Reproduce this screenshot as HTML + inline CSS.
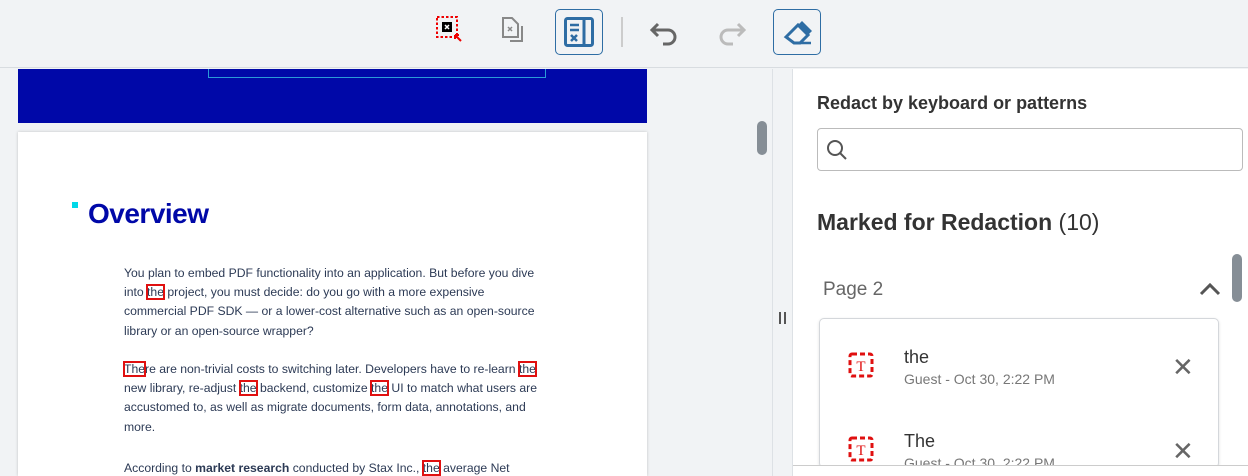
<!DOCTYPE html>
<html><head><style>
*{box-sizing:border-box;margin:0;padding:0}
html,body{width:1248px;height:476px;overflow:hidden}
body{background:#f1f3f5;font-family:"Liberation Sans",sans-serif;position:relative}
.tb{position:absolute;left:0;top:0;width:1248px;height:68px;background:#f1f3f5;border-bottom:1px solid #d8dce0}
.btn{position:absolute;top:9px;width:48px;height:46px;border:1px solid #2e6da4;border-radius:5px;background:#f1f3f5}
.left{position:absolute;left:0;top:69px;width:772px;height:407px;background:#f1f3f5;overflow:hidden}
.blue{position:absolute;left:18px;top:-1px;width:629px;height:55px;background:#0008a8}
.page{position:absolute;left:18px;top:63px;width:629px;height:344px;background:#fff;box-shadow:0 0 3px rgba(0,0,0,.2)}
.p{position:absolute;left:106px;width:460px;font-size:12.2px;line-height:19.2px;color:#2c3a55;white-space:nowrap}
.r{outline:2px solid #e01010;outline-offset:-1px}
.div{position:absolute;left:772px;top:69px;width:21px;height:407px;background:#f1f3f5;border-left:1px solid #dde1e5;border-right:1px solid #dde1e5}
.right{position:absolute;left:793px;top:69px;width:455px;height:407px;background:#fff;overflow:hidden}
.card{position:absolute;left:26px;top:249px;width:400px;height:150px;border:1px solid #d4d7db;border-radius:5px;box-shadow:0 1px 3px rgba(0,0,0,.12);background:#fff}
.it{position:absolute;left:84px;font-size:18px;color:#333}
.sub{position:absolute;left:84px;font-size:14px;color:#777}
.x{position:absolute;left:352px;font-size:26px;color:#666;line-height:1}
</style></head><body>
<div class="tb">
 <svg style="position:absolute;left:436px;top:16px" width="28" height="28"><rect x="1" y="1" width="20" height="20" fill="none" stroke="#e00" stroke-width="2" stroke-dasharray="2.5 2"/><rect x="6" y="6" width="10" height="10" fill="#000"/><path d="M9 9l4 4M13 9l-4 4" stroke="#fff" stroke-width="1.5"/><path d="M19 19l6 6M19 19v4M19 19h4" stroke="#e00" stroke-width="2"/></svg>
 <svg style="position:absolute;left:501px;top:16px" width="26" height="30"><path d="M2 2h9l6 6v13H2z" fill="none" stroke="#888" stroke-width="2"/><path d="M7 11l4 4M11 11l-4 4" stroke="#888" stroke-width="1.5"/><path d="M21 10v15H9" fill="none" stroke="#888" stroke-width="2"/></svg>
 <div class="btn" style="left:555px"></div>
 <svg style="position:absolute;left:564px;top:17px" width="32" height="32"><rect x="1.5" y="1.5" width="27" height="27" rx="2" fill="none" stroke="#2e6da4" stroke-width="3"/><path d="M20 2v26" stroke="#2e6da4" stroke-width="3"/><path d="M6 8h9M6 13h9" stroke="#2e6da4" stroke-width="2.5"/><path d="M7 18l6 6M13 18l-6 6" stroke="#2e6da4" stroke-width="2.5"/></svg>
 <div style="position:absolute;left:621px;top:17px;width:2px;height:30px;background:#ccc"></div>
 <svg style="position:absolute;left:648px;top:20px" width="34" height="26"><path d="M10 4L4 10l6 6" fill="none" stroke="#666" stroke-width="3"/><path d="M4 10h16a7 7 0 0 1 0 14h-5" fill="none" stroke="#666" stroke-width="3"/></svg>
 <svg style="position:absolute;left:714px;top:20px" width="34" height="26"><path d="M24 4l6 6-6 6" fill="none" stroke="#bbb" stroke-width="3"/><path d="M30 10H14a7 7 0 0 0 0 14h5" fill="none" stroke="#bbb" stroke-width="3"/></svg>
 <div class="btn" style="left:773px"></div>
 <svg style="position:absolute;left:782px;top:17px" width="32" height="32"><path d="M4 20L16 8l10 10-8 8h-6z" fill="none" stroke="#2e6da4" stroke-width="3"/><path d="M16 8l4-4 10 10-4 4z" fill="#2e6da4"/><path d="M12 26h17" stroke="#2e6da4" stroke-width="2.5"/></svg>
</div>
<div class="left">
 <div class="blue"><div style="position:absolute;left:190px;top:-2px;width:338px;height:12px;border:1px solid #2a9ad8;border-top:none"></div></div>
 <div class="page">
  <div style="position:absolute;left:54px;top:70px;width:6px;height:6px;background:#00d8e8"></div>
  <div style="position:absolute;left:70px;top:66px;font-size:28px;font-weight:bold;color:#0008a8;letter-spacing:-0.5px">Overview</div>
  <div class="p" style="top:132px">You plan to embed PDF functionality into an application. But before you dive<br>into <span class="r">the</span> project, you must decide: do you go with a more expensive<br>commercial PDF SDK — or a lower-cost alternative such as an open-source<br>library or an open-source wrapper?</div>
  <div class="p" style="top:228px"><span class="r">The</span>re are non-trivial costs to switching later. Developers have to re-learn <span class="r">the</span><br>new library, re-adjust <span class="r">the</span> backend, customize <span class="r">the</span> UI to match what users are<br>accustomed to, as well as migrate documents, form data, annotations, and<br>more.</div>
  <div class="p" style="top:327px">According to <b>market research</b> conducted by Stax Inc., <span class="r">the</span> average Net</div>
 </div>
 <div style="position:absolute;left:757px;top:52px;width:10px;height:34px;border-radius:5px;background:#868e96"></div>
</div>
<div class="div"><div style="position:absolute;left:6px;top:243px;width:2px;height:12px;background:#555"></div><div style="position:absolute;left:11px;top:243px;width:2px;height:12px;background:#555"></div></div>
<div class="right">
 <div style="position:absolute;left:24px;top:24px;font-size:18px;font-weight:bold;color:#333">Redact by keyboard or patterns</div>
 <div style="position:absolute;left:24px;top:59px;width:426px;height:43px;border:1px solid #bbb;border-radius:4px"><svg style="position:absolute;left:8px;top:10px" width="22" height="22"><circle cx="9" cy="9" r="7" fill="none" stroke="#555" stroke-width="2"/><path d="M14 14l6 6" stroke="#555" stroke-width="2"/></svg></div>
 <div style="position:absolute;left:24px;top:140px;font-size:23px;color:#333"><b>Marked for Redaction</b> (10)</div>
 <div style="position:absolute;left:30px;top:210px;font-size:19px;color:#666">Page 2</div>
 <svg style="position:absolute;left:405px;top:212px" width="24" height="16"><path d="M3 13l9-9 9 9" fill="none" stroke="#555" stroke-width="3"/></svg>
 <div style="position:absolute;left:439px;top:185px;width:10px;height:48px;border-radius:5px;background:#868e96"></div>
 <div class="card">
  <svg style="position:absolute;left:28px;top:33px" width="28" height="28"><rect x="2" y="2" width="22" height="22" rx="2" fill="none" stroke="#e01010" stroke-width="3" stroke-dasharray="5 3"/><text x="13" y="19" text-anchor="middle" font-family="Liberation Serif" font-size="15" fill="#e01010">T</text></svg>
  <div class="it" style="top:28px">the</div><div class="sub" style="top:52px">Guest - Oct 30, 2:22 PM</div><div class="x" style="top:35px">✕</div>
  <svg style="position:absolute;left:28px;top:117px" width="28" height="28"><rect x="2" y="2" width="22" height="22" rx="2" fill="none" stroke="#e01010" stroke-width="3" stroke-dasharray="5 3"/><text x="13" y="19" text-anchor="middle" font-family="Liberation Serif" font-size="15" fill="#e01010">T</text></svg>
  <div class="it" style="top:112px">The</div><div class="sub" style="top:136px">Guest - Oct 30, 2:22 PM</div><div class="x" style="top:119px">✕</div>
 </div>
 <div style="position:absolute;left:0;top:396px;width:455px;height:11px;background:#fff;border-top:1px solid #ccc"></div>
</div>
</body></html>
